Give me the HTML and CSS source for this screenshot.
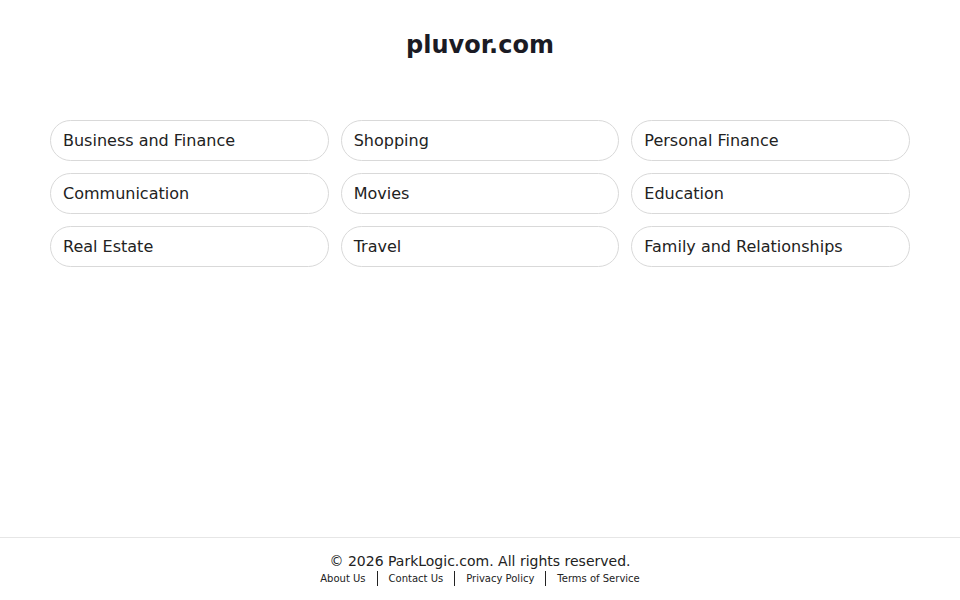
FILE: index.html
```html
<!DOCTYPE html>
<html lang="en">
<head>
    <meta charset="UTF-8">
    <meta name="viewport" content="width=device-width, initial-scale=1.0">
    <title>pluvor.com</title>
    <link rel="stylesheet" href="styles.css">
</head>
<body>

    <!-- header -->
    <header class="site-header">
        <h1>pluvor.com</h1>
    </header>

    <!-- topic links -->
    <main class="content">
        <div class="topic-grid">
            <a class="topic" href="#">Business and Finance</a>
            <a class="topic" href="#">Shopping</a>
            <a class="topic" href="#">Personal Finance</a>
            <a class="topic" href="#">Communication</a>
            <a class="topic" href="#">Movies</a>
            <a class="topic" href="#">Education</a>
            <a class="topic" href="#">Real Estate</a>
            <a class="topic" href="#">Travel</a>
            <a class="topic" href="#">Family and Relationships</a>
        </div>
    </main>

    <!-- footer -->
    <footer class="site-footer">
        <p class="copyright">&copy; 2026 ParkLogic.com. All rights reserved.</p>
        <nav class="footer-links">
            <a href="#">About Us</a>
            <span class="sep"></span>
            <a href="#">Contact Us</a>
            <span class="sep"></span>
            <a href="#">Privacy Policy</a>
            <span class="sep"></span>
            <a href="#">Terms of Service</a>
        </nav>
    </footer>

</body>
</html>
```

FILE: styles.css
```css
body {
    font-family: "DejaVu Sans", Verdana, sans-serif;
    margin: 0;
    min-height: 100vh;
    display: flex;
    flex-direction: column;
    background: #fff;
    color: #222;
}
.site-header {
    text-align: center;
    padding-top: 31px;
}
.site-header h1 {
    margin: 0;
    font-size: 24px;
    line-height: 28px;
    font-weight: bold;
    color: #1b1b24;
}
.content {
    flex: 1;
    width: 860px;
    margin: 61px auto 0;
}
.topic-grid {
    display: grid;
    grid-template-columns: repeat(3, 1fr);
    gap: 12px;
}
.topic {
    display: block;
    padding: 10px 12px;
    font-size: 16px;
    line-height: 19px;
    color: #222;
    text-decoration: none;
    border: 1px solid #d9d9d9;
    border-radius: 999px;
}
.topic:hover {
    background-color: #f5f5f5;
}
.site-footer {
    border-top: 1px solid #e6e6e6;
    text-align: center;
    padding: 15px 0 14px;
}
.copyright {
    margin: 0;
    font-size: 14px;
    line-height: 17px;
    color: #222;
}
.footer-links {
    display: flex;
    justify-content: center;
    align-items: center;
    margin-top: 1px;
}
.footer-links a {
    font-size: 10px;
    line-height: 15px;
    color: #222;
    text-decoration: none;
}
.footer-links .sep {
    display: inline-block;
    width: 1px;
    height: 15px;
    background: #222;
    margin: 0 11px;
}
```
